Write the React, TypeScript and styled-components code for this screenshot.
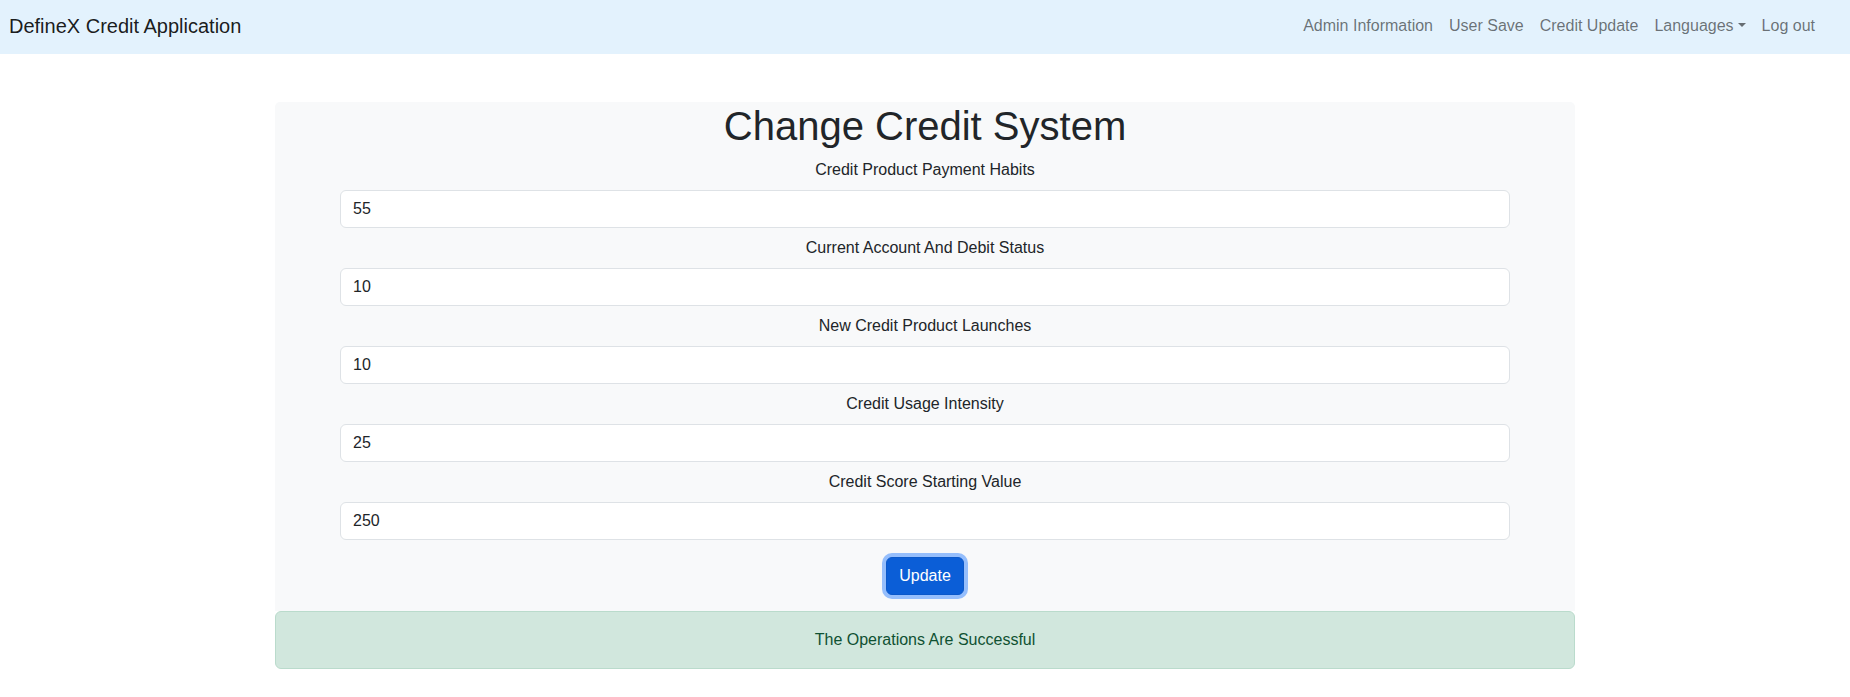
import React from "react";
import styled, { createGlobalStyle } from "styled-components";

const GlobalStyle = createGlobalStyle`
  * { box-sizing: border-box; }
  body {
    margin: 0;
    font-family: "Liberation Sans", Arial, sans-serif;
    font-size: 16px;
    line-height: 1.5;
    color: #212529;
    background: #ffffff;
  }
`;

const NavBar = styled.nav`
  height: 54px;
  background: #e3f2fd;
  display: flex;
  align-items: center;
  justify-content: space-between;
  padding: 0 27px 2px 9px;
`;

const Brand = styled.a`
  font-size: 20px;
  line-height: 30px;
  color: rgba(0, 0, 0, 0.9);
  text-decoration: none;
`;

const NavList = styled.ul`
  display: flex;
  list-style: none;
  margin: 0;
  padding: 0;
`;

const NavLink = styled.a<{ $dropdown?: boolean }>`
  display: block;
  padding: 8px 8px;
  line-height: 24px;
  color: rgba(0, 0, 0, 0.55);
  text-decoration: none;
  &::after {
    content: ${(p) => (p.$dropdown ? '""' : "none")};
    display: inline-block;
    margin-left: 4px;
    vertical-align: 4px;
    border-top: 4.8px solid;
    border-right: 4.8px solid transparent;
    border-left: 4.8px solid transparent;
    border-bottom: 0;
  }
`;

const Main = styled.main`
  width: 1300px;
  margin: 48px auto 0;
`;

const Panel = styled.section`
  background: #f8f9fa;
  border-radius: 5px 5px 0 0;
  padding-bottom: 16px;
  text-align: center;
`;

const Title = styled.h1`
  margin: 0 0 8px;
  font-size: 40px;
  font-weight: 400;
  line-height: 1.2;
  color: #212529;
`;

const Field = styled.div`
  margin-bottom: 8px;
`;

const Label = styled.label`
  display: block;
  margin-bottom: 8px;
  line-height: 24px;
  color: #212529;
`;

const Input = styled.input`
  display: block;
  width: 90%;
  height: 38px;
  margin: 0 auto;
  padding: 6px 12px;
  font-family: inherit;
  font-size: 16px;
  line-height: 24px;
  color: #212529;
  background: #ffffff;
  border: 1px solid #dee2e6;
  border-radius: 6px;
  outline: none;
`;

const Button = styled.button`
  margin-top: 9px;
  height: 38px;
  padding: 6px 12px;
  font-family: inherit;
  font-size: 16px;
  line-height: 24px;
  color: #ffffff;
  background: #0b5ed7;
  border: 1px solid #0a58ca;
  border-radius: 6px;
  box-shadow: 0 0 0 4px rgba(49, 132, 253, 0.5);
  cursor: pointer;
`;

const Alert = styled.div`
  padding: 16px;
  line-height: 24px;
  text-align: center;
  color: #0f5132;
  background: #d1e7dd;
  border: 1px solid #badbcc;
  border-radius: 6px;
`;

const fields = [
  { label: "Credit Product Payment Habits", value: "55" },
  { label: "Current Account And Debit Status", value: "10" },
  { label: "New Credit Product Launches", value: "10" },
  { label: "Credit Usage Intensity", value: "25" },
  { label: "Credit Score Starting Value", value: "250" },
];

export default function App() {
  return (
    <>
      <GlobalStyle />
      <NavBar>
        <Brand href="#">DefineX Credit Application</Brand>
        <NavList>
          <li><NavLink href="#">Admin Information</NavLink></li>
          <li><NavLink href="#">User Save</NavLink></li>
          <li><NavLink href="#">Credit Update</NavLink></li>
          <li><NavLink href="#" $dropdown>Languages</NavLink></li>
          <li><NavLink href="#">Log out</NavLink></li>
        </NavList>
      </NavBar>
      <Main>
        <Panel>
          <Title>Change Credit System</Title>
          {fields.map((f, i) => (
            <Field key={f.label}>
              <Label htmlFor={`f${i}`}>{f.label}</Label>
              <Input id={`f${i}`} defaultValue={f.value} />
            </Field>
          ))}
          <Button type="button">Update</Button>
        </Panel>
        <Alert>The Operations Are Successful</Alert>
      </Main>
    </>
  );
}
